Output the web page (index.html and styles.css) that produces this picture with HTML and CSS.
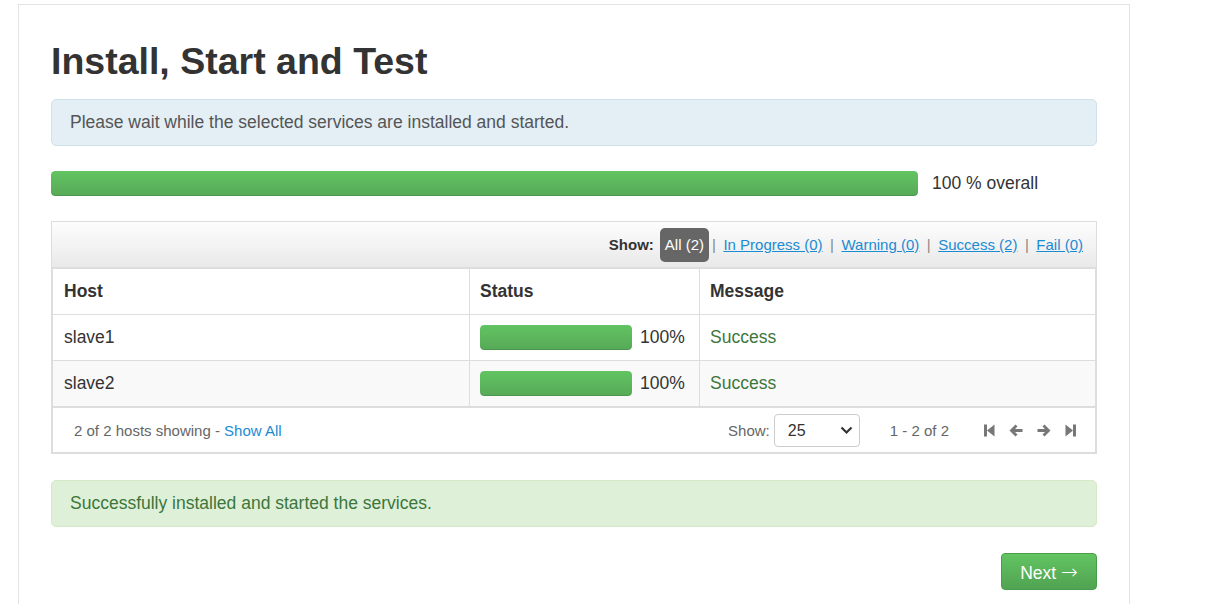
FILE: index.html
```html
<!DOCTYPE html>
<html>
<head>
<meta charset="utf-8">
<title>Install, Start and Test</title>
<link rel="stylesheet" href="styles.css">
</head>
<body>
<div class="panel">
  <h1 class="title">Install, Start and Test</h1>
  <div class="alert alert-info">Please wait while the selected services are installed and started.</div>
  <div class="overall">
    <div class="progress"><div class="bar" style="width:100%"></div></div>
    <div class="overall-label">100 % overall</div>
  </div>
  <div class="hosts-box">
    <div class="filter-bar">
      <span class="filter-label">Show:</span>
      <span class="badge-active">All (2)</span>
      <span class="sep sep-first">|</span>
      <a class="filter-link">In Progress (0)</a>
      <span class="sep">|</span>
      <a class="filter-link">Warning (0)</a>
      <span class="sep">|</span>
      <a class="filter-link">Success (2)</a>
      <span class="sep">|</span>
      <a class="filter-link">Fail (0)</a>
    </div>
    <table class="hosts">
      <colgroup><col class="c-host"><col class="c-status"><col class="c-msg"></colgroup>
      <thead>
        <tr><th>Host</th><th>Status</th><th>Message</th></tr>
      </thead>
      <tbody>
        <tr>
          <td>slave1</td>
          <td><div class="status"><div class="progress small"><div class="bar" style="width:100%"></div></div><span class="pct">100%</span></div></td>
          <td class="msg-success">Success</td>
        </tr>
        <tr class="striped">
          <td>slave2</td>
          <td><div class="status"><div class="progress small"><div class="bar" style="width:100%"></div></div><span class="pct">100%</span></div></td>
          <td class="msg-success">Success</td>
        </tr>
      </tbody>
    </table>
    <div class="table-footer">
      <div class="footer-info">2 of 2 hosts showing - <a class="link">Show All</a></div>
      <div class="footer-right">
        <span class="muted">Show:</span>
        <div class="select-box">
          <span>25</span>
          <svg class="chev" width="13" height="9" viewBox="0 0 13 9"><path d="M1.5 1.5 L6.5 6.5 L11.5 1.5" fill="none" stroke="#333" stroke-width="2.2"/></svg>
        </div>
        <span class="muted range">1 - 2 of 2</span>
        <div class="pager">
          <svg width="11" height="13" viewBox="0 0 11 13"><rect x="0" y="0.5" width="3" height="12" fill="#777"/><path d="M3 6.5 L10.5 0.5 V12.5 Z" fill="#777"/></svg>
          <svg width="14" height="13" viewBox="0 0 14 13"><path d="M0.5 6.5 L6.5 0.5 L8.5 2.5 L6 5 H13.5 V8 H6 L8.5 10.5 L6.5 12.5 Z" fill="#777"/></svg>
          <svg width="14" height="13" viewBox="0 0 14 13"><path d="M13.5 6.5 L7.5 0.5 L5.5 2.5 L8 5 H0.5 V8 H8 L5.5 10.5 L7.5 12.5 Z" fill="#777"/></svg>
          <svg width="11" height="13" viewBox="0 0 11 13"><path d="M0.5 0.5 L8 6.5 L0.5 12.5 Z" fill="#777"/><rect x="8" y="0.5" width="3" height="12" fill="#777"/></svg>
        </div>
      </div>
    </div>
  </div>
  <div class="alert alert-success">Successfully installed and started the services.</div>
  <div class="actions"><button class="btn-next">Next <span class="arrow">&rarr;</span></button></div>
</div>
</body>
</html>
```

FILE: styles.css
```css
* { box-sizing: border-box; }
html, body {
  margin: 0;
  padding: 0;
  background: #fff;
}
body {
  font-family: "Liberation Sans", Arial, sans-serif;
  font-size: 17.5px;
  line-height: 25px;
  color: #333;
}
.panel {
  margin: 4px 0 0 18px;
  width: 1112px;
  border: 1px solid #e3e3e3;
  border-bottom: none;
  padding: 36px 32px 40px 32px;
}
.title {
  margin: 0 0 17px 0;
  font-size: 37.5px;
  line-height: 41px;
  font-weight: bold;
  color: #333;
}
.alert {
  border: 1px solid;
  border-radius: 5px;
  padding: 10px 18px;
  height: 47px;
}
.alert-info {
  background: #e4eff5;
  border-color: #d0e1ea;
  color: #555;
}
.alert-success {
  background: #dff0d8;
  border-color: #d6e9c6;
  color: #3c763d;
  margin-top: 26px;
}
.overall {
  margin-top: 25px;
  display: grid;
  grid-template-columns: 1fr 165px;
  column-gap: 14px;
  align-items: center;
}
.progress {
  height: 25px;
  border-radius: 4px;
  background: #f2f2f2;
  overflow: hidden;
}
.bar {
  height: 100%;
  background: linear-gradient(#62c462, #57a957);
  border-radius: 4px;
  box-shadow: inset 0 -1px 0 rgba(0,0,0,0.12);
}
.overall-label {
  color: #333;
}
.hosts-box {
  margin-top: 25px;
  border: 1px solid #ddd;
}
.filter-bar {
  height: 46px;
  border-bottom: 1px solid #ddd;
  background: linear-gradient(#fdfdfd, #e9e9e9);
  display: flex;
  align-items: center;
  justify-content: flex-end;
  padding-right: 13px;
  font-size: 15px;
}
.filter-label {
  font-weight: bold;
  color: #333;
  margin-right: 6px;
}
.badge-active {
  background: #666;
  color: #fff;
  border-radius: 5px;
  height: 34px;
  line-height: 34px;
  padding: 0 5px;
}
.sep {
  color: #888;
  margin: 0 7.5px;
}
.sep-first {
  margin-left: 3px;
}
.filter-link, .link {
  color: #1b8bd3;
  cursor: pointer;
}
.filter-link {
  text-decoration: underline;
}
.hosts {
  width: 100%;
  border-collapse: collapse;
  table-layout: fixed;
}
.c-host { width: 417px; }
.c-status { width: 230px; }
.hosts th, .hosts td {
  border: 1px solid #ddd;
  padding: 10px;
  text-align: left;
  vertical-align: middle;
  height: 46px;
}
.hosts th:first-child, .hosts td:first-child {
  padding-left: 11px;
}
.hosts th {
  font-weight: bold;
  color: #333;
}
.hosts tr.striped td {
  background: #f9f9f9;
}
.status {
  display: flex;
  align-items: center;
  gap: 8px;
}
.progress.small {
  width: 152px;
  height: 25px;
}
.msg-success {
  color: #3c763d;
}
.table-footer {
  height: 46px;
  border: 1px solid #ddd;
  display: flex;
  align-items: center;
  justify-content: space-between;
  padding: 0 19px 0 21px;
  font-size: 15px;
  color: #666;
}
.footer-right {
  display: flex;
  align-items: center;
}
.muted {
  color: #666;
}
.select-box {
  width: 86px;
  height: 33px;
  border: 1px solid #ccc;
  border-radius: 4px;
  margin-left: 4px;
  display: flex;
  align-items: center;
  justify-content: space-between;
  padding: 0 6px 0 13px;
  font-size: 16px;
  color: #333;
  background: #fff;
}
.range {
  margin-left: 30px;
}
.pager {
  display: flex;
  align-items: center;
  gap: 14px;
  margin-left: 35px;
}
.pager svg {
  display: block;
}
.actions {
  margin-top: 26px;
  display: flex;
  justify-content: flex-end;
}
.btn-next {
  font-family: "Liberation Sans", Arial, sans-serif;
  font-size: 17.5px;
  color: #fff;
  height: 37px;
  width: 96px;
  padding: 0;
  border: 1px solid #4a9e4a;
  border-radius: 4px;
  background: linear-gradient(#62c462, #51a351);
  cursor: pointer;
}
.arrow {
  font-family: "DejaVu Sans", sans-serif;
  font-weight: 200;
  font-size: 20px;
}
```
